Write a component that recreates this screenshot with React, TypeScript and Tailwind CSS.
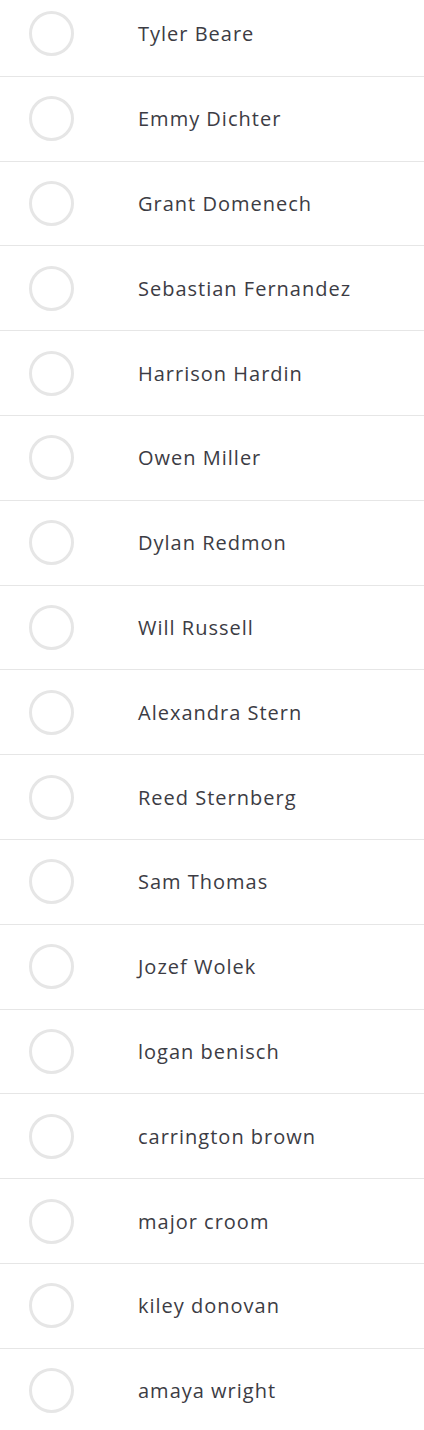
import React from 'react';

const PEOPLE = [
  'Tyler Beare',
  'Emmy Dichter',
  'Grant Domenech',
  'Sebastian Fernandez',
  'Harrison Hardin',
  'Owen Miller',
  'Dylan Redmon',
  'Will Russell',
  'Alexandra Stern',
  'Reed Sternberg',
  'Sam Thomas',
  'Jozef Wolek',
  'logan benisch',
  'carrington brown',
  'major croom',
  'kiley donovan',
  'amaya wright',
];

const App: React.FC = () => {
  return (
    <main className="min-h-screen bg-white overflow-hidden">
      <ul className="-mt-[8px]">
        {PEOPLE.map((name) => (
          <li
            key={name}
            className="flex items-center h-[84.8px] border-b border-[#e6e6e6]"
          >
            <span className="ml-[29px] w-[45px] h-[45px] rounded-full border-[3px] border-[#e6e6e6] flex-shrink-0" />
            <span
              className="ml-[64px] text-[20px] leading-none tracking-[1px] text-[#3c3c44] pt-[1px]"
              style={{ fontFamily: '"Open Sans", sans-serif' }}
            >
              {name}
            </span>
          </li>
        ))}
      </ul>
    </main>
  );
};

export default App;
